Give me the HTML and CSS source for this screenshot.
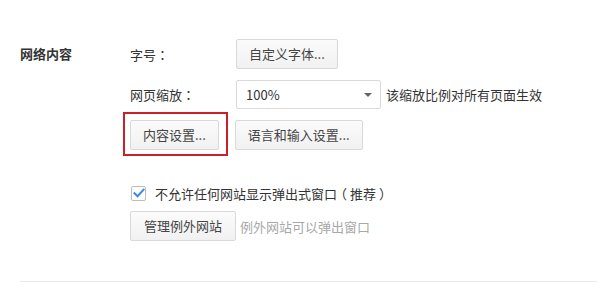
FILE: index.html
```html
<!DOCTYPE html>
<html lang="zh-CN">
<head>
<meta charset="utf-8">
<link rel="stylesheet" href="styles.css">
</head>
<body>
<div class="section">
  <div class="section-title">网络内容</div>
  <div class="section-body">
    <div class="row row-font">
      <span class="row-label">字号<span class="punct" lang="zh-TW">：</span></span>
      <button class="btn">自定义字体...</button>
    </div>
    <div class="row row-zoom">
      <span class="row-label">网页缩放<span class="punct" lang="zh-TW">：</span></span>
      <div class="select">
        <span class="select-value">100%</span>
        <span class="select-arrow"></span>
      </div>
      <span class="hint">该缩放比例对所有页面生效</span>
    </div>
    <div class="row row-buttons">
      <button class="btn btn-marked">内容设置...</button>
      <button class="btn">语言和输入设置...</button>
    </div>
    <label class="row row-check">
      <span class="checkbox">
        <svg width="12" height="10" viewBox="0 0 12 10"><path d="M1.5 5.2 L4.6 8.2 L10.6 1.6" fill="none" stroke="#3b8be0" stroke-width="2" stroke-linecap="square"/></svg>
      </span>
      <span class="check-text">不允许任何网站显示弹出式窗<span class="tight">口</span><span class="paren-open">（</span>推荐<span class="paren-close">）</span></span>
    </label>
    <div class="row row-manage">
      <button class="btn">管理例外网站</button>
      <span class="hint hint-muted">例外网站可以弹出窗口</span>
    </div>
  </div>
</div>
<div class="divider"></div>
</body>
</html>
```
FILE: styles.css
```css
html, body {
  margin: 0;
  padding: 0;
  background: #ffffff;
}
body {
  width: 597px;
  height: 286px;
  overflow: hidden;
  font-family: "Noto Sans CJK SC", "Microsoft YaHei", sans-serif;
  font-size: 13px;
  color: #333333;
}
.punct {
  font-family: "Noto Sans CJK TC", "Noto Sans CJK SC", sans-serif;
}
.tight {
  letter-spacing: -3px;
}
.paren-open {
  padding-right: 3px;
}
.paren-close {
  padding-left: 3px;
}
.section {
  display: flex;
  padding: 39px 0 0 20px;
}
.section-title {
  width: 110px;
  flex: none;
  font-weight: bold;
  line-height: 30px;
  color: #333333;
}
.section-body {
  display: flex;
  flex-direction: column;
  white-space: nowrap;
}
.row {
  display: flex;
  align-items: center;
}
.row-label {
  width: 106px;
  flex: none;
}
.row-zoom {
  margin-top: 11px;
}
.row-buttons {
  margin-top: 11px;
  gap: 16px;
}
.row-check {
  margin-top: 34px;
  height: 18px;
  padding-left: 1px;
}
.row-manage {
  margin-top: 9px;
}
.btn {
  box-sizing: border-box;
  height: 30px;
  padding: 0 12px;
  border: 1px solid #d9d9d9;
  border-radius: 2px;
  background: linear-gradient(#fbfbfb, #f1f1f1);
  font-family: inherit;
  font-size: 13px;
  color: #444444;
  line-height: 28px;
  cursor: default;
}
.row-manage .btn {
  padding: 0 13px;
}
.btn-marked {
  position: relative;
}
.btn-marked::after {
  content: "";
  position: absolute;
  top: -9px;
  left: -8px;
  right: -10px;
  bottom: -7px;
  border: 2px solid #c9202a;
  pointer-events: none;
}
.select {
  box-sizing: border-box;
  width: 145px;
  height: 29px;
  border: 1px solid #d9d9d9;
  border-radius: 2px;
  background: #ffffff;
  display: flex;
  align-items: center;
  padding: 0 0 0 9px;
}
.select-value {
  flex: 1;
  color: #333333;
}
.select-arrow {
  width: 0;
  height: 0;
  border-left: 4px solid transparent;
  border-right: 4px solid transparent;
  border-top: 4px solid #666666;
  margin-right: 8px;
}
.hint {
  margin-left: 5px;
  color: #333333;
}
.hint-muted {
  margin-left: 4px;
  color: #a8a8a8;
}
.checkbox {
  box-sizing: border-box;
  width: 15px;
  height: 15px;
  flex: none;
  border: 1px solid #bdbdbd;
  border-radius: 2px;
  background: #ffffff;
  display: flex;
  align-items: center;
  justify-content: center;
  margin-right: 9px;
}
.check-text {
  color: #333333;
  white-space: nowrap;
}
.divider {
  margin: 40px 0 0 20px;
  height: 1px;
  background: #e9e9e9;
}
```
